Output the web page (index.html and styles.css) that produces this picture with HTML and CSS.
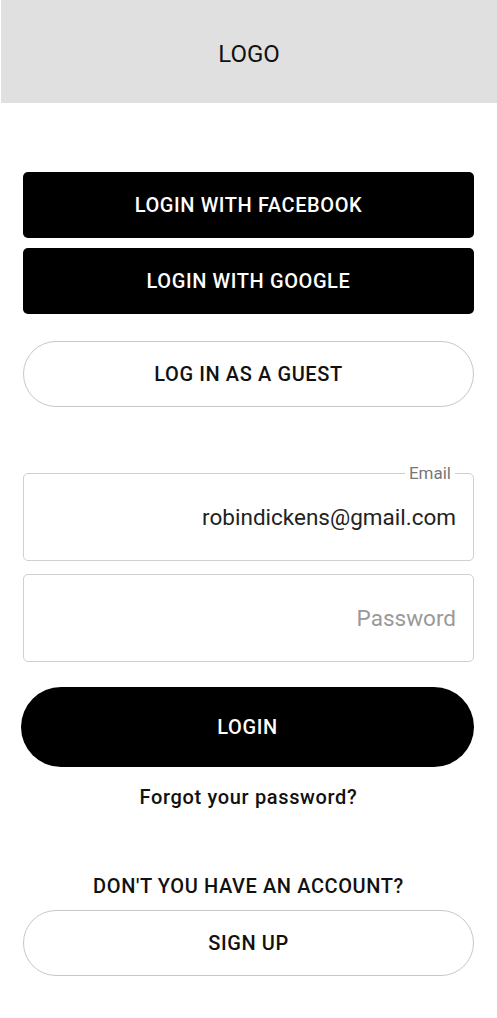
FILE: index.html
```html
<!DOCTYPE html>
<html lang="en">
<head>
  <meta charset="UTF-8" />
  <meta name="viewport" content="width=device-width, initial-scale=1.0"/>
  <title>Login</title>
  <link rel="stylesheet" href="styles.css">
</head>
<body>

<header>
  <span class="logo">LOGO</span>
</header>

<main>
  <div class="social">
    <button class="btn btn-dark">LOGIN WITH FACEBOOK</button>
    <button class="btn btn-dark">LOGIN WITH GOOGLE</button>
  </div>

  <button class="btn btn-outline guest">LOG IN AS A GUEST</button>

  <form id="form-login">
    <label class="field">
      <span class="field-label">Email</span>
      <input type="email" value="robindickens@gmail.com" />
    </label>
    <label class="field">
      <input type="password" placeholder="Password" />
    </label>

    <button type="submit" class="btn btn-login">LOGIN</button>
  </form>

  <a class="forgot" href="#">Forgot your password?</a>

  <p class="no-account">DON'T YOU HAVE AN ACCOUNT?</p>
  <button class="btn btn-outline">SIGN UP</button>
</main>

</body>
</html>
```

FILE: styles.css
```css
body {
  font-family: Roboto, "Liberation Sans", sans-serif;
  background-color: white;
  margin: 0;
  padding: 0;
  color: #111;
}
header {
  background-color: #e0e0e0;
  height: 103px;
  box-sizing: border-box;
  padding-top: 4px;
  margin-left: 1px;
  display: flex;
  align-items: center;
  justify-content: center;
}
.logo {
  font-size: 24px;
  color: #111;
}
main {
  padding: 69px 23px 0 23px;
  display: flex;
  flex-direction: column;
}
.social {
  display: flex;
  flex-direction: column;
  gap: 10px;
}
.btn {
  width: 100%;
  height: 66px;
  font-family: inherit;
  font-size: 20px;
  font-weight: 500;
  letter-spacing: 0.6px;
  cursor: pointer;
  border: none;
}
.btn-dark {
  background-color: black;
  color: white;
  border-radius: 5px;
}
.btn-outline {
  background-color: white;
  color: #111;
  border: 1px solid #c8c8c8;
  border-radius: 33px;
}
.guest {
  margin-top: 27px;
}
form {
  display: flex;
  flex-direction: column;
  margin-top: 66px;
}
.field {
  position: relative;
  display: block;
  height: 88px;
  border: 1px solid #d0d0d0;
  border-radius: 5px;
  margin-bottom: 13px;
  box-sizing: border-box;
}
.field-label {
  position: absolute;
  top: -11px;
  right: 18px;
  padding: 0 4px;
  background: white;
  font-size: 17px;
  color: #777;
}
.field input {
  width: 100%;
  height: 100%;
  box-sizing: border-box;
  border: none;
  background: transparent;
  text-align: right;
  padding: 0 17px;
  font-family: inherit;
  font-size: 22.5px;
  color: #222;
  outline: none;
}
.field input::placeholder {
  color: #999;
}
.btn-login {
  height: 80px;
  width: calc(100% + 2px);
  margin: 12px 0 0 -2px;
  background-color: black;
  color: white;
  border-radius: 40px;
}
.forgot {
  margin-top: 18px;
  line-height: 24px;
  text-align: center;
  font-size: 20px;
  font-weight: 500;
  letter-spacing: 0.65px;
  color: #111;
  text-decoration: none;
}
.no-account {
  margin: 65px 0 12px 0;
  line-height: 24px;
  text-align: center;
  font-size: 20px;
  font-weight: 500;
  letter-spacing: 0.6px;
}
```
